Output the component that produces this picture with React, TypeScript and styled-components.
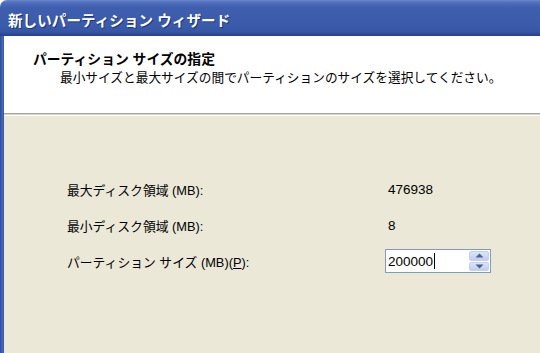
import styled, { createGlobalStyle } from "styled-components";

const GlobalStyle = createGlobalStyle`
  html, body {
    margin: 0;
    padding: 0;
    background: #ffffff;
    overflow: hidden;
  }
`;

const uiFont = `"Liberation Sans", "Noto Sans CJK JP", sans-serif`;

const Window = styled.div`
  width: 540px;
  height: 353px;
  display: flex;
  flex-direction: column;
  font-family: ${uiFont};
  color: #000;
`;

const TitleBar = styled.div`
  height: 36px;
  flex: none;
  box-sizing: border-box;
  border-top-left-radius: 7px;
  background: linear-gradient(
    to bottom,
    #6a86cc 0px,
    #4d6cba 3px,
    #3f5eae 8px,
    #3b5aa9 26px,
    #3556a6 32px,
    #27428f 35px,
    #2a4590 36px
  );
  display: flex;
  align-items: center;
  padding: 3px 0 0 8px;
`;

const TitleText = styled.span`
  color: #ffffff;
  font-weight: bold;
  font-size: 14.5px;
  letter-spacing: 0.1px;
  text-shadow: 1px 1px 0 #1e3474;
`;

const Frame = styled.div`
  flex: 1;
  display: flex;
  min-height: 0;
`;

const SideBorder = styled.div`
  width: 4px;
  flex: none;
  background: linear-gradient(to right, #2e4c9e, #4866b8 60%, #3957a8);
`;

const Content = styled.div`
  flex: 1;
  display: flex;
  flex-direction: column;
`;

const Header = styled.div`
  height: 77px;
  flex: none;
  box-sizing: border-box;
  background: #ffffff;
  padding: 15px 0 0 29px;
`;

const HeaderTitle = styled.div`
  font-weight: bold;
  font-size: 13.8px;
  line-height: 18px;
`;

const HeaderSub = styled.div`
  font-size: 12.7px;
  line-height: 19px;
  padding-left: 27px;
`;

const Separator = styled.div`
  height: 3px;
  flex: none;
  border-top: 1px solid #a7a69c;
  border-bottom: 1px solid #ffffff;
  background: #d6d3c6;
  box-sizing: border-box;
`;

const Body = styled.div`
  flex: 1;
  background: #ebe8d8;
  padding: 55px 0 0 63px;
`;

const FieldGrid = styled.div`
  display: grid;
  grid-template-columns: 318px 106px;
  grid-auto-rows: 36px;
  align-items: center;
`;

const Label = styled.div`
  font-size: 12.8px;
`;

const Value = styled.div`
  font-size: 13.5px;
  padding-left: 3px;
`;

const SpinBox = styled.div`
  height: 24px;
  box-sizing: border-box;
  border: 1px solid #7f9db9;
  background: #ffffff;
  display: flex;
  align-items: stretch;
`;

const SpinText = styled.div`
  flex: 1;
  display: flex;
  align-items: center;
  padding-left: 2px;
  font-size: 13.5px;
`;

const Caret = styled.span`
  display: inline-block;
  width: 1px;
  height: 16px;
  background: #000;
  margin-left: 1px;
`;

const SpinButtons = styled.div`
  width: 20px;
  display: flex;
  flex-direction: column;
  gap: 1px;
  padding: 1px 1px 1px 0;
`;

const SpinButton = styled.div`
  flex: 1;
  display: flex;
  align-items: center;
  justify-content: center;
  border-radius: 2px;
  background: linear-gradient(to bottom, #dbe4fb, #bfcdf2);
  border: 1px solid #c4d0ef;
`;

const Arrow = ({ up }: { up?: boolean }) => (
  <svg width="9" height="5" viewBox="0 0 9 5">
    <path
      d={up ? "M0.5 4.5 L4.5 0.5 L8.5 4.5 Z" : "M0.5 0.5 L4.5 4.5 L8.5 0.5 Z"}
      fill="#4d6185"
    />
  </svg>
);

export default function App() {
  return (
    <>
      <GlobalStyle />
      <Window>
        <TitleBar>
          <TitleText>新しいパーティション ウィザード</TitleText>
        </TitleBar>
        <Frame>
          <SideBorder />
          <Content>
            <Header>
              <HeaderTitle>パーティション サイズの指定</HeaderTitle>
              <HeaderSub>
                最小サイズと最大サイズの間でパーティションのサイズを選択してください。
              </HeaderSub>
            </Header>
            <Separator />
            <Body>
              <FieldGrid>
                <Label>最大ディスク領域 (MB):</Label>
                <Value>476938</Value>
                <Label>最小ディスク領域 (MB):</Label>
                <Value>8</Value>
                <Label>
                  パーティション サイズ (MB)(<u>P</u>):
                </Label>
                <SpinBox>
                  <SpinText>
                    200000
                    <Caret />
                  </SpinText>
                  <SpinButtons>
                    <SpinButton>
                      <Arrow up />
                    </SpinButton>
                    <SpinButton>
                      <Arrow />
                    </SpinButton>
                  </SpinButtons>
                </SpinBox>
              </FieldGrid>
            </Body>
          </Content>
        </Frame>
      </Window>
    </>
  );
}
